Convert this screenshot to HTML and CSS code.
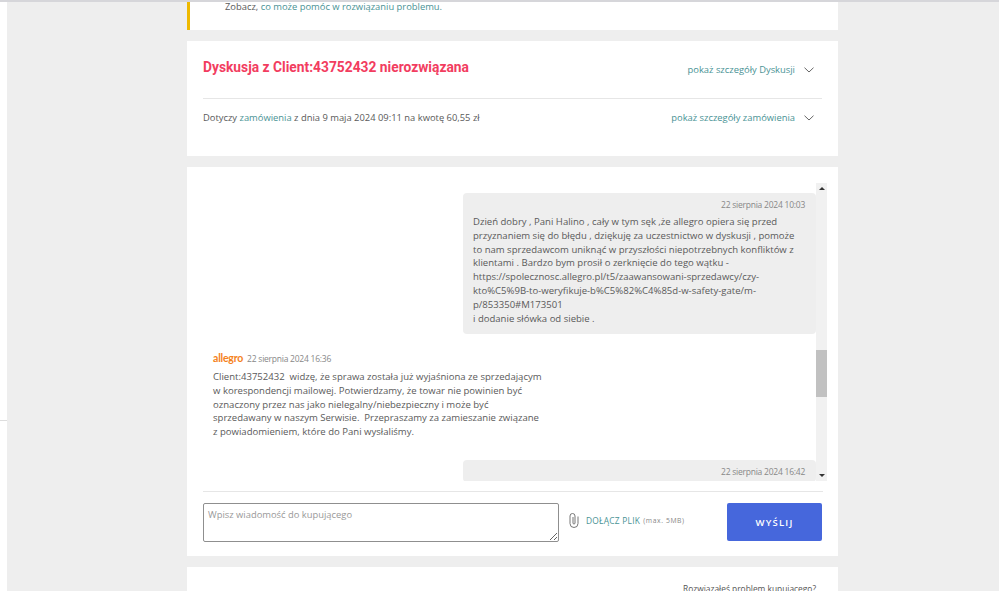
FILE: index.html
```html
<!DOCTYPE html>
<html lang="pl">
<head>
<meta charset="utf-8">
<title>Dyskusja</title>
<link rel="stylesheet" href="styles.css">
</head>
<body>
<div class="page">
  <div class="edge"><div class="edge-line"></div></div>
  <main class="content">
    <section class="card notice">
      <p class="notice-text">Zobacz, <a href="#">co może pomóc w rozwiązaniu problemu.</a></p>
    </section>
    <section class="card summary">
      <div class="summary-head">
        <h1 class="title">Dyskusja z Client:43752432 nierozwiązana</h1>
        <a class="toggle" href="#">pokaż szczegóły Dyskusji
          <svg class="chev" width="10" height="6" viewBox="0 0 10 6"><path d="M.5.7 5 5 9.5.7" fill="none" stroke="#666" stroke-width="1"/></svg>
        </a>
      </div>
      <div class="summary-order">
        <p class="order-text">Dotyczy <a href="#">zamówienia</a> z dnia 9 maja 2024 09:11 na kwotę 60,55 zł</p>
        <a class="toggle" href="#">pokaż szczegóły zamówienia
          <svg class="chev" width="10" height="6" viewBox="0 0 10 6"><path d="M.5.7 5 5 9.5.7" fill="none" stroke="#666" stroke-width="1"/></svg>
        </a>
      </div>
    </section>
    <section class="card chat">
      <div class="thread">
        <div class="messages">
          <article class="msg msg-out">
            <div class="msg-date">22 sierpnia 2024 10:03</div>
            <p class="msg-text">Dzień dobry , Pani Halino , cały w tym sęk ,że allegro opiera się przed<br>przyznaniem się do błędu , dziękuję za uczestnictwo w dyskusji , pomoże<br>to nam sprzedawcom uniknąć w przyszłości niepotrzebnych konfliktów z<br>klientami . Bardzo bym prosił o zerknięcie do tego wątku -<br>https://spolecznosc.allegro.pl/t5/zaawansowani-sprzedawcy/czy-<br>kto%C5%9B-to-weryfikuje-b%C5%82%C4%85d-w-safety-gate/m-<br>p/853350#M173501<br>i dodanie słówka od siebie .</p>
          </article>
          <article class="msg msg-in">
            <div class="msg-head"><span class="brand">allegro</span><span class="msg-stamp">22 sierpnia 2024 16:36</span></div>
            <p class="msg-text">Client:43752432&nbsp; widzę, że sprawa została już wyjaśniona ze sprzedającym<br>w korespondencji mailowej. Potwierdzamy, że towar nie powinien być<br>oznaczony przez nas jako nielegalny/niebezpieczny i może być<br>sprzedawany w naszym Serwisie.&nbsp; Przepraszamy za zamieszanie związane<br>z powiadomieniem, które do Pani wysłaliśmy.</p>
          </article>
          <article class="msg msg-out">
            <div class="msg-date">22 sierpnia 2024 16:42</div>
          </article>
        </div>
        <div class="scrollbar">
          <span class="arrow arrow-up"></span>
          <div class="scroll-track"><div class="scroll-thumb"></div></div>
          <span class="arrow arrow-down"></span>
        </div>
      </div>
      <form class="composer">
        <textarea class="input" placeholder="Wpisz wiadomość do kupującego"></textarea>
        <div class="attach">
          <svg class="clip" width="10" height="15" viewBox="0 0 10 15"><path d="M9 3.500V10.500a4 4 0 0 1-8 0V3a2.500 2.500 0 0 1 5 0V10a1 1 0 0 1-2 0V4" fill="none" stroke="#777" stroke-width="1"/></svg>
          <a class="attach-link" href="#">DOŁĄCZ PLIK</a>
          <span class="attach-note">(max. 5MB)</span>
        </div>
        <button class="send" type="button">WYŚLIJ</button>
      </form>
    </section>
    <section class="card solved">
      <a class="solved-link" href="#">Rozwiązałeś problem kupującego?</a>
    </section>
  </main>
</div>
</body>
</html>
```
FILE: styles.css
```css
* { box-sizing: border-box; }
html, body { margin: 0; height: 591px; overflow: hidden; background: #eee; }
body { font-family: "Open Sans", sans-serif; font-size: 9.4px; color: #5a5a5a; }
a { color: #4a9395; text-decoration: none; }
p { margin: 0; }

.page { display: flex; height: 591px; border-top: 2px solid #d6d6da; }
.edge { width: 7px; background: #fff; padding-top: 418px; flex: none; }
.edge-line { height: 1px; background: #ddd; }
.content { margin-left: 180px; width: 651px; display: flex; flex-direction: column; gap: 11px; }
.card { background: #fff; }

.notice { height: 28px; border-left: 3px solid #eeb900; padding-left: 35px; flex: none; }
.notice-text { line-height: 10px; }

.summary { height: 115px; padding: 0 16px; flex: none; }
.summary-head { height: 58px; display: flex; justify-content: space-between; border-bottom: 1px solid #e6e6e6; }
.title { margin: 16px 0 0; font: 700 13.8px/20px Roboto, sans-serif; color: #f23d5f; }
.toggle { display: flex; align-items: center; gap: 9px; padding-right: 8px; line-height: 14px; margin-top: 22px; height: 14px; }
.summary-order { display: flex; justify-content: space-between; }
.summary-order .toggle { margin-top: 12px; }
.order-text { margin-top: 12px; line-height: 14px; }

.chat { height: 389px; padding: 16px 10px 0 16px; flex: none; display: flex; flex-direction: column; }
.thread { height: 298px; display: flex; flex: none; }
.messages { width: 613px; overflow: hidden; padding-top: 10px; display: flex; flex-direction: column; }
.msg { flex: none; }
.msg-out { width: 353px; margin-left: 260px; background: #eee; border-radius: 4px; padding: 6px 11px 0 10px; }
.msg-out:first-child { height: 141px; margin-bottom: 16px; }
.msg-date { text-align: right; font-size: 8.5px; letter-spacing: -.24px; line-height: 11px; color: #888; margin-bottom: 5px; }
.msg-text { font-size: 9.55px; line-height: 13.8px; white-space: nowrap; }
.msg-in { width: 353px; padding: 0 10px; height: 110px; }
.msg-head { display: flex; align-items: center; gap: 4px; height: 16px; margin-bottom: 4px; }
.brand { font: 700 10.5px/16px Lato, sans-serif; color: #f58220; letter-spacing: -.2px; }
.msg-stamp { font-size: 8.5px; letter-spacing: -.24px; color: #888; }

.scrollbar { width: 11px; background: #f1f1f1; display: flex; flex-direction: column; align-items: center; }
.arrow { flex: none; width: 0; height: 0; margin: 4px 0; border-left: 3px solid transparent; border-right: 3px solid transparent; }
.arrow-up { border-bottom: 3px solid #333; }
.arrow-down { border-top: 3px solid #333; }
.scroll-track { flex: 1; width: 100%; padding-top: 156px; }
.scroll-thumb { height: 47px; background: #c1c1c1; }

.composer { margin-right: 5px; border-top: 1px solid #e6e6e6; margin-top: 10px; padding-top: 11px; display: flex; align-items: flex-start; }
.input { width: 356px; height: 39px; border: 1px solid #8f8f8f; border-radius: 2px; padding: 4px; font: 9.4px/14px "Open Sans", sans-serif; color: #555; }
.input::placeholder { color: #999; opacity: 1; }
.attach { display: flex; align-items: center; margin: 10px 0 0 10px; width: 158px; flex: none; }
.clip { margin-right: 7px; }
.attach-link { font-size: 8.4px; letter-spacing: .25px; margin-right: 3px; }
.attach-note { font-size: 6.8px; letter-spacing: .6px; color: #888; }
.send { width: 95px; height: 38px; border: 0; border-radius: 2px; background: #4667dc; color: #fff; font: 600 9.5px "Open Sans", sans-serif; letter-spacing: 1.2px; white-space: nowrap; padding: 0; }

.solved { flex: 1; padding: 16px 22px 0 0; text-align: right; line-height: 12px; }
.solved-link { color: #555; font-size: 8.4px; }
```
